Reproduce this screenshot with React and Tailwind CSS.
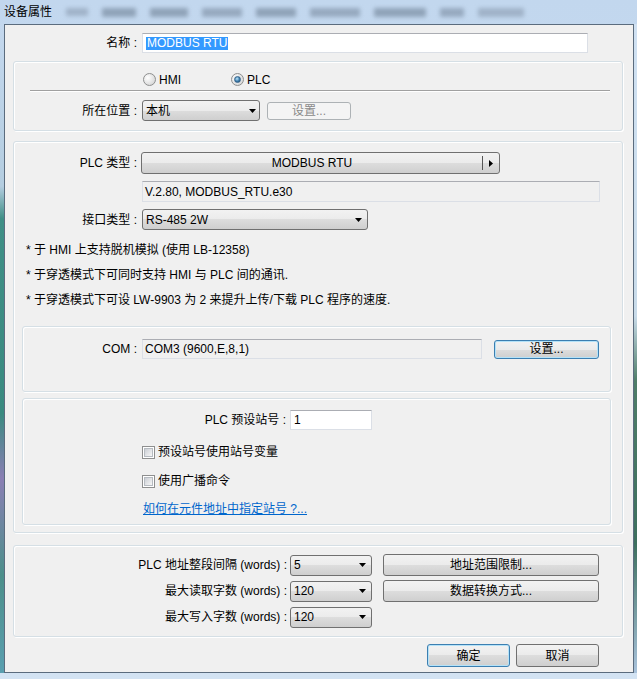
import React from "react";

const FONT = "font-['Liberation_Sans','Noto_Sans_CJK_SC',sans-serif]";
const BTN_FILL =
  "bg-[linear-gradient(to_bottom,#f2f2f2_0%,#ebebeb_50%,#dddddd_50%,#cfcfcf_100%)]";

function Btn({ children, className = "", primary = false, disabled = false }) {
  let look = "border-[#707070] " + BTN_FILL;
  if (primary) look = "border-[#3c7fb1] shadow-[inset_0_0_0_1px_#b4e2f8] " + BTN_FILL;
  if (disabled) look = "border-[#adb2b5] bg-[#f4f4f4] text-[#8a8a8a]";
  return (
    <div
      className={
        "flex shrink-0 items-center justify-center rounded-[3px] border text-[12px] leading-none " +
        look +
        " " +
        className
      }
    >
      {children}
    </div>
  );
}

function DownArrow() {
  return (
    <svg width="7" height="4" viewBox="0 0 7 4" className="shrink-0">
      <path d="M0 0h7L3.5 4z" fill="#000" />
    </svg>
  );
}

function Combo({ value, className = "" }) {
  return (
    <div
      className={
        "flex shrink-0 items-center rounded-[3px] border border-[#707070] pl-[3px] pr-[5px] text-[12px] " +
        BTN_FILL +
        " " +
        className
      }
    >
      <span className="flex-1 leading-none">{value}</span>
      <DownArrow />
    </div>
  );
}

function TextBox({ children, className = "", readOnly = false }) {
  return (
    <div
      className={
        "flex shrink-0 items-center border border-[#dbdfe6] border-t-[#abadb3] pl-[2px] text-[12px] " +
        (readOnly ? "bg-[#f0f0f0]" : "bg-white") +
        " " +
        className
      }
    >
      {children}
    </div>
  );
}

function Group({ children, className = "" }) {
  return (
    <div
      className={
        "rounded-[3px] border border-[#d5dfe5] shadow-[inset_1px_1px_0_#ffffff,1px_1px_0_#ffffff] " +
        className
      }
    >
      {children}
    </div>
  );
}

function Label({ children, className = "" }) {
  return (
    <div className={"shrink-0 whitespace-nowrap text-right text-[12px] leading-none " + className}>
      {children}
    </div>
  );
}

function Radio({ checked }) {
  return (
    <div className="flex size-[13px] shrink-0 items-center justify-center rounded-full border border-[#8e8f8f] bg-[radial-gradient(circle_at_35%_35%,#ffffff,#dcdcdc_70%,#c4c4c4)]">
      {checked && (
        <div className="size-[7px] rounded-full border border-[#36648b] bg-[radial-gradient(circle_at_40%_35%,#bde6fb,#3d7eae_55%,#1b3f5f)]" />
      )}
    </div>
  );
}

function Check() {
  return (
    <div className="flex size-[13px] shrink-0 items-center justify-center border border-[#8e8f8f] bg-white">
      <div className="size-[9px] border border-[#b6bbc1] bg-[linear-gradient(135deg,#cbcfd5,#f7f7f7)]" />
    </div>
  );
}

export default function App() {
  return (
    <div
      className={
        "flex h-[679px] w-[637px] flex-col overflow-hidden bg-[linear-gradient(to_bottom,#c2d7ee,#d3e3f3)] text-black " +
        FONT
      }
    >
      {/* title bar */}
      <div className="flex h-[24px] shrink-0 items-center pl-[4px]">
        <span className="text-[12px] leading-none">设备属性</span>
        <div className="ml-[14px] flex items-center gap-[14px] opacity-60 blur-[2px]">
          <div className="h-[8px] w-[22px] bg-[#8a9bb0]" />
          <div className="h-[9px] w-[34px] bg-[#6f8196]" />
          <div className="h-[9px] w-[38px] bg-[#6f8196]" />
          <div className="h-[9px] w-[40px] bg-[#7a8ca1]" />
          <div className="h-[9px] w-[40px] bg-[#6f8196]" />
          <div className="h-[9px] w-[50px] bg-[#7a8ca1]" />
          <div className="h-[9px] w-[52px] bg-[#6f8196]" />
          <div className="h-[9px] w-[24px] bg-[#7a8ca1]" />
          <div className="h-[9px] w-[46px] bg-[#8a9bb0]" />
        </div>
      </div>

      <div className="flex h-[649px] shrink-0">
        <div className="w-[4px] bg-[linear-gradient(to_bottom,#c4d8ee_0%,#b4cde0_25%,#3f8f86_30%,#3a8a80_60%,#8a7fb4_70%,#4c8f8a_85%,#5a9fb0_100%)]" />

        {/* dialog client area */}
        <div className="w-[630px] border border-[#5b6c7e] bg-[#f0f0f0] pt-[8px]">
          {/* name */}
          <div className="flex h-[20px] items-center">
            <Label className="w-[132px]">名称 :</Label>
            <TextBox className="ml-[5px] h-[20px] w-[446px] !pl-[3px]">
              <span className="bg-[#3399ff] px-[1px] leading-[13px] text-white">MODBUS RTU</span>
            </TextBox>
          </div>

          {/* location group */}
          <Group className="ml-[8px] mt-[8px] h-[70px] w-[610px] pt-[11px]">
            <div className="flex h-[13px] items-center pl-[129px] text-[12px] leading-none">
              <div className="flex w-[88px] items-center gap-[3px]">
                <Radio />
                <span>HMI</span>
              </div>
              <div className="flex items-center gap-[3px]">
                <Radio checked />
                <span>PLC</span>
              </div>
            </div>
            <div className="ml-[16px] mt-[4px] h-[2px] w-[580px] border-t border-[#a0a0a0] bg-white" />
            <div className="mt-[8px] flex h-[21px] items-center">
              <Label className="w-[123px]">所在位置 :</Label>
              <Combo value="本机" className="ml-[5px] h-[21px] w-[118px] !pr-[3px]" />
              <Btn disabled className="ml-[7px] h-[18px] w-[84px]">
                设置...
              </Btn>
            </div>
          </Group>

          {/* PLC group */}
          <Group className="ml-[8px] mt-[10px] h-[392px] w-[610px] pt-[10px]">
            <div className="flex h-[22px] items-center">
              <Label className="w-[123px]">PLC 类型 :</Label>
              <div
                className={
                  "ml-[4px] flex h-[22px] w-[359px] items-center rounded-[3px] border border-[#707070] text-[12px] " +
                  BTN_FILL
                }
              >
                <span className="flex-1 text-center leading-none">MODBUS RTU</span>
                <div className="h-[14px] w-px bg-[#555555]" />
                <svg width="4" height="7" viewBox="0 0 4 7" className="mx-[6px]">
                  <path d="M0 0l4 3.5L0 7z" fill="#000" />
                </svg>
              </div>
            </div>
            <div className="mt-[7px] flex h-[21px] items-center">
              <TextBox readOnly className="ml-[128px] h-[21px] w-[458px]">
                <span className="leading-none">V.2.80, MODBUS_RTU.e30</span>
              </TextBox>
            </div>
            <div className="mt-[7px] flex h-[21px] items-center">
              <Label className="w-[123px]">接口类型 :</Label>
              <Combo value="RS-485 2W" className="ml-[5px] h-[21px] w-[226px]" />
            </div>

            <div className="mt-[7px] pl-[12px] text-[12px]">
              <div className="flex h-[25px] items-center">* 于 HMI 上支持脱机模拟 (使用 LB-12358)</div>
              <div className="flex h-[25px] items-center">* 于穿透模式下可同时支持 HMI 与 PLC 间的通讯.</div>
              <div className="flex h-[25px] items-center">
                * 于穿透模式下可设 LW-9903 为 2 来提升上传/下载 PLC 程序的速度.
              </div>
            </div>

            {/* COM */}
            <Group className="ml-[8px] mt-[14px] h-[66px] w-[589px] pt-[12px]">
              <div className="flex h-[20px] items-center">
                <Label className="w-[114px]">COM :</Label>
                <TextBox readOnly className="ml-[5px] h-[20px] w-[340px]">
                  <span className="leading-none">COM3 (9600,E,8,1)</span>
                </TextBox>
                <Btn primary className="ml-[12px] h-[19px] w-[105px]">
                  设置...
                </Btn>
              </div>
            </Group>

            {/* station */}
            <Group className="ml-[8px] mt-[6px] h-[127px] w-[589px] pt-[11px]">
              <div className="flex h-[20px] items-center">
                <Label className="w-[263px]">PLC 预设站号 :</Label>
                <TextBox className="ml-[4px] h-[20px] w-[82px] !pl-[3px]">
                  <span className="leading-none">1</span>
                </TextBox>
              </div>
              <div className="mt-[12px] flex h-[20px] items-center gap-[3px] pl-[119px] text-[12px]">
                <Check />
                <span className="leading-none">预设站号使用站号变量</span>
              </div>
              <div className="mt-[9px] flex h-[20px] items-center gap-[3px] pl-[119px] text-[12px]">
                <Check />
                <span className="leading-none">使用广播命令</span>
              </div>
              <div className="mt-[8px] flex h-[20px] items-center pl-[120px] text-[12px]">
                <span className="leading-none text-[#0066cc] underline">如何在元件地址中指定站号 ?...</span>
              </div>
            </Group>
          </Group>

          {/* address group */}
          <Group className="ml-[8px] mt-[12px] h-[92px] w-[610px] pt-[8px]">
            <div className="flex h-[22px] items-center">
              <Label className="w-[273px]">PLC 地址整段间隔 (words) :</Label>
              <Combo value="5" className="ml-[3px] h-[21px] w-[82px]" />
              <Btn className="ml-[11px] h-[22px] w-[216px]">地址范围限制...</Btn>
            </div>
            <div className="mt-[4px] flex h-[22px] items-center">
              <Label className="w-[273px]">最大读取字数 (words) :</Label>
              <Combo value="120" className="ml-[3px] h-[21px] w-[82px]" />
              <Btn className="ml-[11px] h-[22px] w-[216px]">数据转换方式...</Btn>
            </div>
            <div className="mt-[4px] flex h-[22px] items-center">
              <Label className="w-[273px]">最大写入字数 (words) :</Label>
              <Combo value="120" className="ml-[3px] h-[21px] w-[82px]" />
            </div>
          </Group>

          {/* ok / cancel */}
          <div className="mt-[7px] flex justify-end gap-[6px] pr-[34px]">
            <Btn primary className="h-[23px] w-[83px]">
              确定
            </Btn>
            <Btn className="h-[23px] w-[83px]">取消</Btn>
          </div>
        </div>

        <div className="w-[3px] bg-[linear-gradient(to_bottom,#d0e1f2_0%,#c9dbe9_45%,#4f7d68_55%,#3d6f5e_80%,#aac3dc_100%)]" />
      </div>
    </div>
  );
}
